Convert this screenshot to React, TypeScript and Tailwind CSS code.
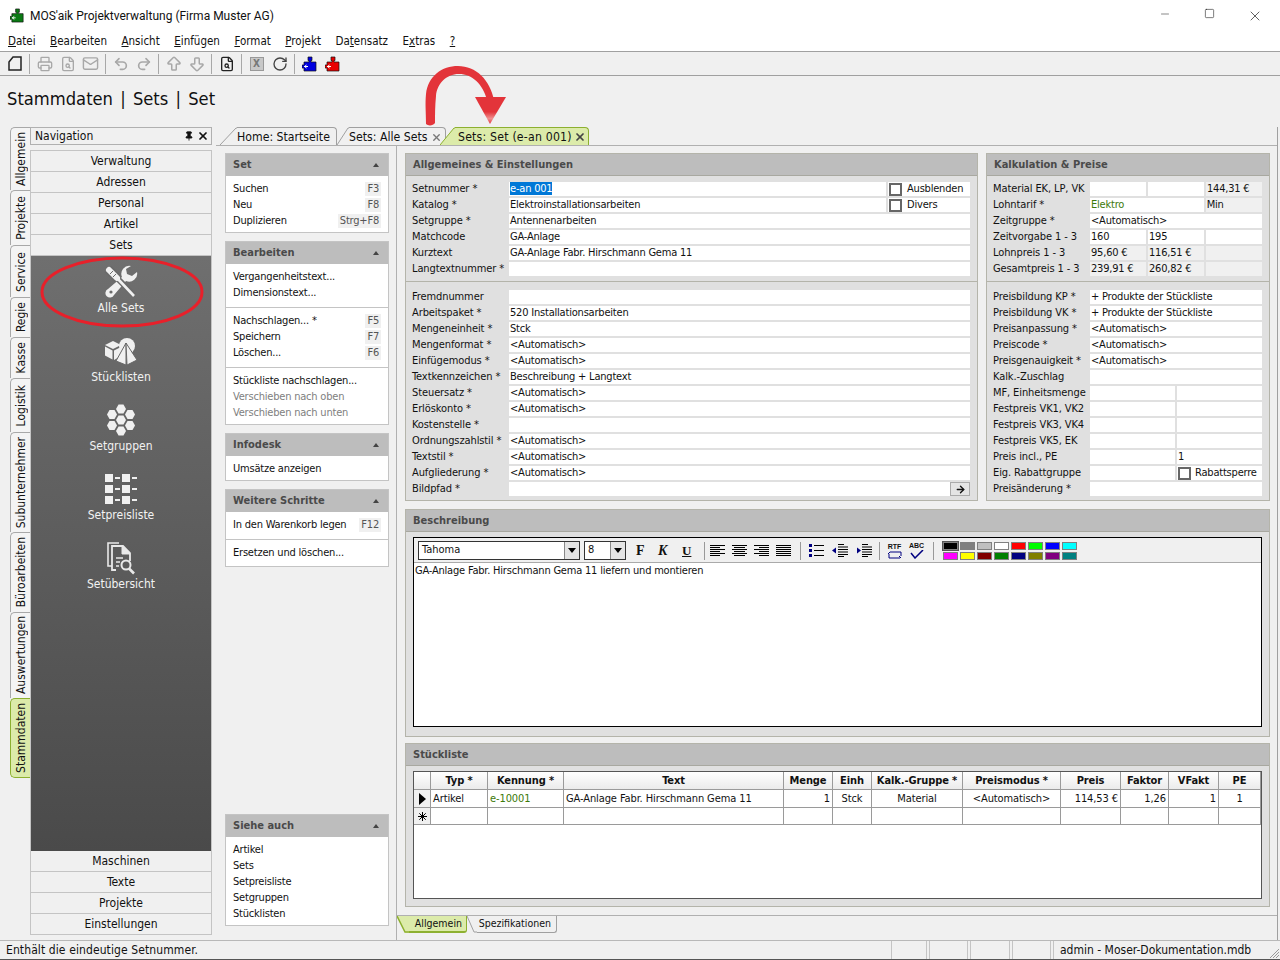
import type { ReactNode } from 'react';
import { Printer, FileSearch, Mail, Undo2, Redo2, ArrowBigUp, ArrowBigDown, RotateCw, X, Pin, Minus, Square, ArrowRight } from 'lucide-react';

const Puzzle = ({ color, size = 16 }: { color: string; size?: number }) => (
  <svg width={size} height={size} viewBox="0 0 16 16">
    <path d="M6 1h4v3.5H9V6h5v9H2v-3H0V9h2V6h5V4.5H6z" fill={color} stroke="#111" strokeWidth="0.7" />
    <path d="M2 10.5h4M4.5 9l-2 1.5 2 1.5" stroke="#fff" strokeWidth="1" fill="none" />
  </svg>
);

const ToolSep = () => <div className="w-px h-[20px] bg-[#a8a8a8] mx-[3px]" />;

const ToolBtn = ({ children }: { children: ReactNode }) => (
  <div className="w-[23px] h-[20px] flex items-center justify-center">{children}</div>
);

const menus: [string, string, string][] = [
  ['', 'D', 'atei'],
  ['', 'B', 'earbeiten'],
  ['', 'A', 'nsicht'],
  ['', 'E', 'infügen'],
  ['', 'F', 'ormat'],
  ['', 'P', 'rojekt'],
  ['Da', 't', 'ensatz'],
  ['E', 'x', 'tras'],
  ['', '?', ''],
];

const sideTabs = [
  { label: 'Allgemein', h: 'h-[63px]' },
  { label: 'Projekte', h: 'h-[55px]' },
  { label: 'Service', h: 'h-[52px]' },
  { label: 'Regie', h: 'h-[40px]' },
  { label: 'Kasse', h: 'h-[41px]' },
  { label: 'Logistik', h: 'h-[54px]' },
  { label: 'Subunternehmer', h: 'h-[100px]' },
  { label: 'Büroarbeiten', h: 'h-[80px]' },
  { label: 'Auswertungen', h: 'h-[86px]' },
];

const NavBtn = ({ label }: { label: string }) => (
  <div className="h-[21px] shrink-0 flex items-center justify-center border-b border-[#c4c4c4] bg-[#f0f0f0] text-[12px] text-[#111]">{label}</div>
);

const ToolsIcon = () => (
  <svg width="34" height="34" viewBox="0 0 34 34">
    <path d="M27 1A8 8 0 0 0 18 12L4 24a4.5 4.5 0 1 0 6 6l12-14a8 8 0 0 0 11-9l-5 4-5-2-1-5z" fill="#f0f0f0" />
    <circle cx="7" cy="27" r="1.6" fill="#6a6a6a" />
    <path d="M13 13L30 30" stroke="#6a6a6a" strokeWidth="6" />
    <path d="M13 13L30 31" stroke="#f0f0f0" strokeWidth="2.6" />
    <path d="M4 4L14 14" stroke="#6a6a6a" strokeWidth="9" />
    <path d="M5 5L13 13" stroke="#f0f0f0" strokeWidth="6" strokeLinecap="round" />
    <path d="M6 9L9 6M9 12L12 9" stroke="#6a6a6a" strokeWidth="1" />
  </svg>
);

const BoxesIcon = () => (
  <svg width="34" height="28" viewBox="0 0 34 28">
    <circle cx="23" cy="9" r="8" fill="#f0f0f0" />
    <path d="M1 8l8-4 8 4-8 4z" fill="#f0f0f0" />
    <path d="M1 9.5l7.5 4v9L1 18.5zM10 13.500l7-3.500v9l-7 4z" fill="#f0f0f0" />
    <path d="M22 6L12 24l10 4z" fill="#f0f0f0" stroke="#666" strokeWidth="1" />
    <path d="M22 6l11 17-10 5z" fill="#f0f0f0" stroke="#666" strokeWidth="1" />
  </svg>
);

const hexes: [number, number][] = [[16, 5], [7, 10.5], [25, 10.5], [16, 16], [7, 21.5], [25, 21.5], [16, 27]];

const HexIcon = () => (
  <svg width="32" height="32" viewBox="0 0 32 32">
    {hexes.map(([x, y]) => (
      <polygon key={`${x}-${y}`} points={`${x - 5},${y} ${x - 2.5},${y - 4.6} ${x + 2.5},${y - 4.6} ${x + 5},${y} ${x + 2.5},${y + 4.6} ${x - 2.5},${y + 4.6}`} fill="#f0f0f0" />
    ))}
  </svg>
);

const GridIcon = () => (
  <div className="grid grid-cols-[8px_5px_8px_5px] gap-x-[2px] gap-y-[3px] items-center w-[32px]">
    {[0, 1, 2].map((i) => (
      <div key={i} className="contents">
        <div className="h-[8px] bg-[#f0f0f0]" />
        <div className="h-[2px] bg-[#f0f0f0]" />
        <div className="h-[8px] bg-[#f0f0f0]" />
        <div className="h-[2px] bg-[#f0f0f0]" />
      </div>
    ))}
  </div>
);

const DocSearchIcon = () => (
  <svg width="28" height="33" viewBox="0 0 28 33" fill="none" stroke="#e8e8e8">
    <path d="M5 24H1V1h11" strokeWidth="1.6" />
    <path d="M9 28H5V4h11l7 7v8" strokeWidth="1.800" fill="#5b5b5b" />
    <path d="M15 4v8h8z" fill="#e8e8e8" />
    <path d="M9 16h7M9 20h4M9 24h3" strokeWidth="1.500" />
    <circle cx="19" cy="23" r="4.500" strokeWidth="2" />
    <path d="M22 26.500l5 5" strokeWidth="2.600" />
  </svg>
);

const navItems: [string, ReactNode][] = [
  ['Alle Sets', <ToolsIcon key="a" />],
  ['Stücklisten', <BoxesIcon key="b" />],
  ['Setgruppen', <HexIcon key="c" />],
  ['Setpreisliste', <GridIcon key="d" />],
  ['Setübersicht', <DocSearchIcon key="e" />],
];

const ActionRow = ({ label, keys, off }: { label: string; keys?: string; off?: boolean }) => (
  <div className={`h-[16px] flex items-center justify-between text-[11px] tracking-[-0.2px] ${off ? 'text-[#808080]' : 'text-[#111]'}`}>
    <span>{label}</span>
    {keys && <span className="bg-[#f0f0f0] px-[2px] text-[#555] leading-[14px]">{keys}</span>}
  </div>
);

const ActionGroup = ({ title, children, className = '' }: { title: string; children: ReactNode; className?: string }) => (
  <div className={`border border-[#c4c4c4] bg-white ${className}`}>
    <div className="h-[22px] bg-[#bdbdbd] flex items-center justify-between pl-[7px] pr-[9px]">
      <span className="text-[11px] font-bold font-['DejaVu_Sans'] text-[#4a4a4a]">{title}</span>
      <span className="w-0 h-0 border-x-[3px] border-x-transparent border-b-[4px] border-b-[#444]" />
    </div>
    {children}
  </div>
);

const ActionSection = ({ children, last, className }: { children: ReactNode; last?: boolean; className: string }) => (
  <div className={`px-[7px] ${className} ${last ? '' : 'border-b border-[#c4c4c4]'}`}>{children}</div>
);

const Field = ({ children, grey, className = '' }: { children?: ReactNode; grey?: boolean; className?: string }) => (
  <div className={`h-[14px] leading-[14px] pl-[1px] tracking-[-0.2px] overflow-hidden whitespace-nowrap ${grey ? 'bg-[#f0f0f0]' : 'bg-white'} ${className}`}>{children}</div>
);

const FormRow = ({ label, children }: { label: string; children: ReactNode }) => (
  <div className="flex h-[14px] items-center text-[11px] text-[#111]">
    <div className="w-[97px] shrink-0 whitespace-nowrap tracking-[-0.1px]">{label}</div>
    <div className="flex-1 flex gap-[2px] min-w-0">{children}</div>
  </div>
);

const Panel = ({ title, children, className = '' }: { title: string; children: ReactNode; className?: string }) => (
  <div className={`bg-[#e0e0e0] border border-[#b4b4aa] ${className}`}>
    <div className="h-[22px] pt-[1px] bg-[#bdbdbd] border-b border-[#a8a8a0] flex items-center px-[7px] text-[11px] font-bold font-['DejaVu_Sans'] text-[#4a4a4a]">{title}</div>
    {children}
  </div>
);

const Check = () => <span className="inline-block w-[13px] h-[13px] border-2 border-[#666] bg-white shrink-0" />;

const basicRows: [string, string][] = [
  ['Katalog *', 'Elektroinstallationsarbeiten'],
  ['Setgruppe *', 'Antennenarbeiten'],
  ['Matchcode', 'GA-Anlage'],
  ['Kurztext', 'GA-Anlage Fabr. Hirschmann Gema 11'],
  ['Langtextnummer *', ''],
];

const extraRows: [string, string][] = [
  ['Fremdnummer', ''],
  ['Arbeitspaket *', '520 Installationsarbeiten'],
  ['Mengeneinheit *', 'Stck'],
  ['Mengenformat *', '<Automatisch>'],
  ['Einfügemodus *', '<Automatisch>'],
  ['Textkennzeichen *', 'Beschreibung + Langtext'],
  ['Steuersatz *', '<Automatisch>'],
  ['Erlöskonto *', '<Automatisch>'],
  ['Kostenstelle *', ''],
  ['Ordnungszahlstil *', '<Automatisch>'],
  ['Textstil *', '<Automatisch>'],
  ['Aufgliederung *', '<Automatisch>'],
];

const priceTop: [string, string, string, string][] = [
  ['Zeitvorgabe 1 - 3', '160', '195', ''],
  ['Lohnpreis 1 - 3', '95,60 €', '116,51 €', ''],
  ['Gesamtpreis 1 - 3', '239,91 €', '260,82 €', ''],
];

const priceSingle: [string, string][] = [
  ['Preisbildung KP *', '+ Produkte der Stückliste'],
  ['Preisbildung VK *', '+ Produkte der Stückliste'],
  ['Preisanpassung *', '<Automatisch>'],
  ['Preiscode *', '<Automatisch>'],
  ['Preisgenauigkeit *', '<Automatisch>'],
  ['Kalk.-Zuschlag', ''],
];

const priceDouble: [string, string][] = [
  ['MF, Einheitsmenge', ''],
  ['Festpreis VK1, VK2', ''],
  ['Festpreis VK3, VK4', ''],
  ['Festpreis VK5, EK', ''],
  ['Preis incl., PE', '1'],
];

const Lines = ({ rows }: { rows: [number, number][] }) => (
  <svg width="16" height="12" viewBox="0 0 16 12" className="block">
    {rows.map(([x, w], i) => (
      <rect key={i} x={x} y={i * 2} width={w} height="1" fill="#000" />
    ))}
  </svg>
);

const EdSep = ({ className }: { className: string }) => <div className={`w-px h-[18px] bg-[#999] ${className}`} />;

const swatches = [
  'bg-[#000000]', 'bg-[#808080]', 'bg-[#c0c0c0]', 'bg-[#ffffff]', 'bg-[#ff0000]', 'bg-[#00ff00]', 'bg-[#0000ff]', 'bg-[#00ffff]',
  'bg-[#ff00ff]', 'bg-[#ffff00]', 'bg-[#800000]', 'bg-[#008000]', 'bg-[#000080]', 'bg-[#808000]', 'bg-[#800080]', 'bg-[#008080]',
];

const Combo = ({ text, className }: { text: string; className: string }) => (
  <div className={`h-[19px] flex items-center border border-[#333] bg-white ${className}`}>
    <span className="flex-1 pl-[3px] text-[11px]">{text}</span>
    <span className="w-[15px] h-[17px] bg-[#e4e4e4] border-l border-[#888] flex items-center justify-center">
      <span className="w-0 h-0 border-x-[4px] border-x-transparent border-t-[5px] border-t-black" />
    </span>
  </div>
);

const columns = ['', 'Typ *', 'Kennung *', 'Text', 'Menge', 'Einh', 'Kalk.-Gruppe *', 'Preismodus *', 'Preis', 'Faktor', 'VFakt', 'PE'];

const Cell = ({ children, className = '' }: { children?: ReactNode; className?: string }) => (
  <div className={`border-r border-b border-[#9a9a9a] px-[2px] pt-[1px] flex items-center overflow-hidden whitespace-nowrap ${className}`}>{children}</div>
);

export default function App() {
  return (
    <div className="relative w-[1280px] h-[960px] overflow-hidden flex flex-col bg-[#f0f0f0] text-[#111] font-['DejaVu_Sans','Noto_Sans',sans-serif] font-stretch-condensed">
      {/* Title bar */}
      <div className="h-[31px] bg-white flex items-center pl-[10px] pr-[3px] shrink-0">
        <Puzzle color="#0a7a14" size={15} />
        <span className="ml-[5px] text-[12px] font-['Roboto',sans-serif] font-stretch-normal">MOS'aik Projektverwaltung (Firma Muster AG)</span>
        <div className="ml-auto flex">
          <div className="w-[45px] flex justify-center"><Minus size={12} strokeWidth={1} /></div>
          <div className="w-[45px] flex justify-center"><Square size={11} strokeWidth={1.2} /></div>
          <div className="w-[45px] flex justify-center"><X size={16} strokeWidth={1} /></div>
        </div>
      </div>

      {/* Menu */}
      <div className="h-[20px] pt-[1px] bg-white flex items-center pl-[8px] gap-[14.5px] text-[11.5px] shrink-0">
        {menus.map(([a, u, b]) => (
          <span key={u + b}>{a}<u>{u}</u>{b}</span>
        ))}
      </div>

      {/* Toolbar */}
      <div className="h-[25px] border-y border-[#a0a0a0] flex items-center pl-[3px] shrink-0">
        <ToolBtn>
          <svg width="14" height="15" viewBox="0 0 14 15"><path d="M1 6l4-5h8v13H1z" fill="none" stroke="#222" strokeWidth="1.500" /></svg>
        </ToolBtn>
        <ToolSep />
        <ToolBtn><Printer size={16} color="#a8a8a8" /></ToolBtn>
        <ToolBtn><FileSearch size={16} color="#a8a8a8" /></ToolBtn>
        <ToolBtn><Mail size={17} color="#a8a8a8" /></ToolBtn>
        <ToolSep />
        <ToolBtn><Undo2 size={16} color="#a8a8a8" strokeWidth={2.500} /></ToolBtn>
        <ToolBtn><Redo2 size={16} color="#a8a8a8" strokeWidth={2.500} /></ToolBtn>
        <ToolSep />
        <ToolBtn><ArrowBigUp size={18} color="#a8a8a8" /></ToolBtn>
        <ToolBtn><ArrowBigDown size={18} color="#a8a8a8" /></ToolBtn>
        <ToolSep />
        <ToolBtn><FileSearch size={16} color="#222" /></ToolBtn>
        <ToolSep />
        <ToolBtn>
          <div className="w-[14px] h-[14px] border border-[#999] bg-[#c8c8c8] flex items-center justify-center text-[10px] font-bold text-[#777]">X</div>
        </ToolBtn>
        <ToolBtn><RotateCw size={16} color="#444" /></ToolBtn>
        <ToolSep />
        <ToolBtn><Puzzle color="#0000e0" /></ToolBtn>
        <ToolBtn><Puzzle color="#e80000" /></ToolBtn>
      </div>

      {/* Heading */}
      <div className="h-[51px] shrink-0 pl-[7px] pt-[9px] text-[18.2px] leading-[27px] [word-spacing:2px] text-[#111]">Stammdaten | Sets | Set</div>

      {/* Body */}
      <div className="flex-1 flex pl-[10px] min-h-0">
        {/* Side tabs */}
        <div className="w-[20px] flex flex-col shrink-0">
          {sideTabs.map((tab) => (
            <div key={tab.label} className={`${tab.h} border-l border-t border-[#a8a8a8] rounded-tl-[5px] bg-[#f4f4f4] flex items-center justify-center`}>
              <span className="[writing-mode:vertical-rl] rotate-180 text-[12px]">{tab.label}</span>
            </div>
          ))}
          <div className="h-[80px] border border-r-0 border-[#8db030] rounded-l-[5px] bg-[#dcebaa] flex items-center justify-center">
            <span className="[writing-mode:vertical-rl] rotate-180 text-[12px]">Stammdaten</span>
          </div>
        </div>

        {/* Navigation */}
        <div className="w-[182px] shrink-0 flex flex-col pb-[5px]">
          <div className="h-[18px] border border-[#b0b0b0] flex items-center justify-between pl-[4px] pr-[2px] text-[12px] shrink-0">
            <span>Navigation</span>
            <span className="flex items-center gap-[3px]">
              <Pin size={10} fill="#111" />
              <X size={12} strokeWidth={3.500} />
            </span>
          </div>
          <div className="mt-[5px] flex-1 flex flex-col border-x border-t border-[#c4c4c4] min-h-0">
            {['Verwaltung', 'Adressen', 'Personal', 'Artikel', 'Sets'].map((n) => <NavBtn key={n} label={n} />)}
            <div className="flex-1 bg-gradient-to-b from-[#6f6f6f] to-[#4a4a4a] pt-[9px]">
              {navItems.map(([label, icon]) => (
                <div key={label} className="h-[69px] flex flex-col items-center text-[12px] text-[#f2f2f2]">
                  <div className="h-[34px] flex items-center justify-center">{icon}</div>
                  <span className="mt-[-1px] leading-[20px]">{label}</span>
                </div>
              ))}
            </div>
            {['Maschinen', 'Texte', 'Projekte', 'Einstellungen'].map((n) => <NavBtn key={n} label={n} />)}
          </div>
        </div>

        {/* Document */}
        <div className="ml-[4px] w-[1062px] flex flex-col border-r border-[#a0a0a0]">
          {/* Tabs */}
          <div className="h-[19px] flex items-end border-b border-[#b0b0b0] text-[12.2px] shrink-0">
            <svg width="21" height="18" viewBox="0 0 21 18" className="shrink-0"><path d="M4 18L20 1h1" fill="none" stroke="#a0a0a0" /></svg>
            <div className="w-[100px] h-[18px] pt-[1px] border-t border-r border-[#a0a0a0] rounded-tr-[4px] flex items-center whitespace-nowrap">Home: Startseite</div>
            <svg width="12" height="18" viewBox="0 0 12 18" className="shrink-0"><path d="M0 18L11 1h1" fill="none" stroke="#a0a0a0" /></svg>
            <div className="w-[97px] h-[18px] pt-[1px] border-t border-r border-[#a0a0a0] rounded-tr-[4px] flex items-center whitespace-nowrap">
              Sets: Alle Sets
              <X size={11} strokeWidth={3} color="#777" className="ml-[4px]" />
            </div>
            <svg width="15" height="18" viewBox="0 0 15 18" className="shrink-0 -ml-[6px]"><path d="M0 18L14 1h1v17z" fill="#dcebaa" /><path d="M0 18L14 1h1" fill="none" stroke="#8db030" /></svg>
            <div className="w-[134px] h-[18px] pt-[1px] border-t border-r border-[#8db030] rounded-tr-[4px] bg-[#dcebaa] flex items-center whitespace-nowrap pl-[3px] tracking-[0.2px]">
              Sets: Set (e-an 001)
              <X size={12} strokeWidth={3.500} color="#444" className="ml-[2px]" />
            </div>
          </div>

          <div className="flex-1 flex min-h-0">
            {/* Actions column */}
            <div className="w-[181px] shrink-0 border-r border-[#b0b0b0] pt-[7px] pl-[9px] pr-[7px] pb-[14px] flex flex-col gap-[8px]">
              <ActionGroup title="Set">
                <ActionSection last className="pt-[5px] pb-[3px]">
                  <ActionRow label="Suchen" keys="F3" />
                  <ActionRow label="Neu" keys="F8" />
                  <ActionRow label="Duplizieren" keys="Strg+F8" />
                </ActionSection>
              </ActionGroup>
              <ActionGroup title="Bearbeiten">
                <ActionSection className="pt-[5px] pb-[6px]">
                  <ActionRow label="Vergangenheitstext..." />
                  <ActionRow label="Dimensionstext..." />
                </ActionSection>
                <ActionSection className="pt-[5px] pb-[6px]">
                  <ActionRow label="Nachschlagen... *" keys="F5" />
                  <ActionRow label="Speichern" keys="F7" />
                  <ActionRow label="Löschen..." keys="F6" />
                </ActionSection>
                <ActionSection last className="pt-[5px] pb-[3px]">
                  <ActionRow label="Stückliste nachschlagen..." />
                  <ActionRow label="Verschieben nach oben" off />
                  <ActionRow label="Verschieben nach unten" off />
                </ActionSection>
              </ActionGroup>
              <ActionGroup title="Infodesk">
                <ActionSection last className="pt-[5px] pb-[3px]"><ActionRow label="Umsätze anzeigen" /></ActionSection>
              </ActionGroup>
              <ActionGroup title="Weitere Schritte">
                <ActionSection className="pt-[5px] pb-[6px]"><ActionRow label="In den Warenkorb legen" keys="F12" /></ActionSection>
                <ActionSection last className="py-[5px]"><ActionRow label="Ersetzen und löschen..." /></ActionSection>
              </ActionGroup>
              <ActionGroup title="Siehe auch" className="mt-auto">
                <ActionSection last className="pt-[5px] pb-[3px]">
                  {['Artikel', 'Sets', 'Setpreisliste', 'Setgruppen', 'Stücklisten'].map((n) => <ActionRow key={n} label={n} />)}
                </ActionSection>
              </ActionGroup>
            </div>

            {/* Main */}
            <div className="flex-1 min-w-0 flex flex-col">
              <div className="flex-1 pl-[8px] pr-[7px] pt-[7px] flex flex-col min-h-0">
                <div className="flex gap-[8px] h-[348px] shrink-0">
                  <Panel title="Allgemeines & Einstellungen" className="w-[573px]">
                    <div className="pl-[6px] pr-[7px] pt-[6px] pb-[5px] border-b border-[#b4b4aa] flex flex-col gap-[2px]">
                      <FormRow label="Setnummer *">
                        <Field className="w-[377px] shrink-0"><span className="bg-[#0078d7] text-white">e-an 001</span></Field>
                        <Field className="flex-1 flex items-center gap-[5px] text-[11px]"><Check />Ausblenden</Field>
                      </FormRow>
                      {basicRows.map(([label, value], i) => (
                        <FormRow key={label} label={label}>
                          {i === 0 ? (
                            <>
                              <Field className="w-[377px] shrink-0">{value}</Field>
                              <Field className="flex-1 flex items-center gap-[5px]"><Check />Divers</Field>
                            </>
                          ) : (
                            <Field className="flex-1">{value}</Field>
                          )}
                        </FormRow>
                      ))}
                    </div>
                    <div className="pl-[6px] pr-[7px] pt-[8px] flex flex-col gap-[2px]">
                      {extraRows.map(([label, value]) => (
                        <FormRow key={label} label={label}>
                          <Field className="flex-1">{value}</Field>
                        </FormRow>
                      ))}
                      <FormRow label="Bildpfad *">
                        <Field className="flex-1 flex justify-end">
                          <span className="w-[20px] h-[14px] bg-[#e4e4e4] border border-[#aaa] flex items-center justify-center"><ArrowRight size={11} strokeWidth={3} /></span>
                        </Field>
                      </FormRow>
                    </div>
                  </Panel>

                  <Panel title="Kalkulation & Preise" className="w-[284px]">
                    <div className="pl-[6px] pr-[7px] pt-[6px] pb-[5px] border-b border-[#b4b4aa] flex flex-col gap-[2px]">
                      <FormRow label="Material EK, LP, VK">
                        <Field className="flex-1" />
                        <Field className="flex-1" />
                        <Field grey className="flex-1">144,31 €</Field>
                      </FormRow>
                      <FormRow label="Lohntarif *">
                        <Field className="flex-[2.04] text-[#3d7a0a]">Elektro</Field>
                        <Field grey className="flex-1">Min</Field>
                      </FormRow>
                      <FormRow label="Zeitgruppe *"><Field className="flex-1">&lt;Automatisch&gt;</Field></FormRow>
                      {priceTop.map(([label, a, b, c], i) => (
                        <FormRow key={label} label={label}>
                          <Field grey={i > 0} className="flex-1">{a}</Field>
                          <Field grey={i > 0} className="flex-1">{b}</Field>
                          <Field grey={i > 0} className="flex-1">{c}</Field>
                        </FormRow>
                      ))}
                    </div>
                    <div className="pl-[6px] pr-[7px] pt-[8px] flex flex-col gap-[2px]">
                      {priceSingle.map(([label, value]) => (
                        <FormRow key={label} label={label}><Field className="flex-1">{value}</Field></FormRow>
                      ))}
                      {priceDouble.map(([label, value]) => (
                        <FormRow key={label} label={label}>
                          <Field className="flex-1" />
                          <Field className="flex-1">{value}</Field>
                        </FormRow>
                      ))}
                      <FormRow label="Eig. Rabattgruppe">
                        <Field className="flex-1" />
                        <Field className="flex-1 flex items-center gap-[4px]"><Check />Rabattsperre</Field>
                      </FormRow>
                      <FormRow label="Preisänderung *"><Field className="flex-1" /></FormRow>
                    </div>
                  </Panel>
                </div>

                <Panel title="Beschreibung" className="mt-[8px] h-[228px] shrink-0">
                  <div className="mx-[7px] mt-[5px] h-[190px] border border-black bg-white text-[11px] flex flex-col">
                    <div className="h-[25px] pt-[1px] shrink-0 border-b border-[#aaa] bg-[#f0f0f0] flex items-center pl-[4px]">
                      <Combo text="Tahoma" className="w-[162px]" />
                      <Combo text="8" className="w-[42px] ml-[4px]" />
                      <span className="ml-[10px] w-[12px] font-['Liberation_Serif'] font-bold text-[14px] font-stretch-normal">F</span>
                      <span className="ml-[10px] w-[12px] font-['Liberation_Serif'] font-bold italic text-[14px] font-stretch-normal">K</span>
                      <span className="ml-[12px] w-[12px] font-['Liberation_Serif'] font-bold underline text-[13px] font-stretch-normal">U</span>
                      <EdSep className="ml-[10px] mr-[5px]" />
                      <div className="flex gap-[6px]">
                        <Lines rows={[[0, 15], [0, 10], [0, 15], [0, 10], [0, 15], [0, 10]]} />
                        <Lines rows={[[0, 15], [2, 11], [0, 15], [2, 11], [0, 15], [2, 11]]} />
                        <Lines rows={[[0, 15], [5, 10], [0, 15], [5, 10], [0, 15], [5, 10]]} />
                        <Lines rows={[[0, 15], [0, 15], [0, 15], [0, 15], [0, 15], [0, 15]]} />
                      </div>
                      <EdSep className="mx-[8px]" />
                      <div className="flex gap-[8px] items-center">
                        <svg width="15" height="13" viewBox="0 0 15 13"><path d="M0 0h3v3H0zM0 5h3v3H0zM0 10h3v3H0z" fill="#000080" /><path d="M5 1.500h10M5 6.500h10M5 11.500h10" stroke="#000" /></svg>
                        <svg width="16" height="13" viewBox="0 0 16 13"><path d="M0 6.500l4-3v6z" fill="#000080" /><path d="M6 .5h6M6 3h10M6 5.500h10M6 8h10M6 10.500h10M6 12.500h6" stroke="#000" /></svg>
                        <svg width="16" height="13" viewBox="0 0 16 13"><path d="M5 6.500l-4-3v6z" fill="#000080" /><path d="M6 .5h6M6 3h10M6 5.500h10M6 8h10M6 10.500h10M6 12.500h6" stroke="#000" /></svg>
                      </div>
                      <EdSep className="ml-[7px] mr-[6px]" />
                      <div className="flex gap-[5px] items-center font-['Liberation_Sans'] text-[7px] font-bold leading-[8px] font-stretch-normal">
                        <span className="flex flex-col items-center w-[17px]">RTF
                          <svg width="16" height="8" viewBox="0 0 16 8"><path d="M2 3v4h11M14 5V1H3M12 5l2 2M1 3l2-2" fill="none" stroke="#000080" /></svg>
                        </span>
                        <span className="flex flex-col items-center w-[17px]">ABC
                          <svg width="16" height="9" viewBox="0 0 16 9"><path d="M2 3l4 5 8-8" fill="none" stroke="#000080" strokeWidth="1.500" /></svg>
                        </span>
                      </div>
                      <EdSep className="ml-[8px] mr-[9px]" />
                      <div className="grid grid-cols-8 gap-x-[2px] gap-y-[2px]">
                        {swatches.map((c, i) => (
                          <span key={c} className={`w-[15px] h-[8px] border border-[#808080] ${c} ${i === 0 ? 'outline outline-1 outline-[#555]' : ''}`} />
                        ))}
                      </div>
                    </div>
                    <div className="pl-[1px] pt-[1px] leading-[14px] tracking-[-0.2px]">GA-Anlage Fabr. Hirschmann Gema 11 liefern und montieren</div>
                  </div>
                </Panel>

                <Panel title="Stückliste" className="mt-[6px] h-[164px] shrink-0">
                  <div className="mx-[7px] mt-[5px] h-[128px] border border-[#555] bg-white text-[11px] tracking-[-0.1px]">
                    <div className="grid grid-cols-[17px_57px_76px_220px_49px_39px_91px_98px_60px_48px_50px_42px] grid-rows-[18px_18px_17px]">
                      {columns.map((c, i) => (
                        <Cell key={i} className="justify-center font-bold bg-gradient-to-b from-white to-[#ebebeb] text-[11px]">{c}</Cell>
                      ))}
                      <Cell className="justify-center bg-[#f0f0f0]"><span className="w-0 h-0 border-y-[6px] border-y-transparent border-l-[7px] border-l-black" /></Cell>
                      <Cell>Artikel</Cell>
                      <Cell className="text-[#3d7a0a]">e-10001</Cell>
                      <Cell>GA-Anlage Fabr. Hirschmann Gema 11</Cell>
                      <Cell className="justify-end">1</Cell>
                      <Cell className="justify-center">Stck</Cell>
                      <Cell className="justify-center">Material</Cell>
                      <Cell className="justify-center">&lt;Automatisch&gt;</Cell>
                      <Cell className="justify-end">114,53 €</Cell>
                      <Cell className="justify-end">1,26</Cell>
                      <Cell className="justify-end">1</Cell>
                      <Cell className="justify-center">1</Cell>
                      <Cell className="justify-center bg-[#f0f0f0]">
                        <svg width="9" height="9" viewBox="0 0 9 9"><path d="M4.5 0v9M0 4.500h9M1.300 1.300l6.400 6.400M7.700 1.300L1.300 7.700" stroke="#000" /></svg>
                      </Cell>
                      {columns.slice(1).map((c) => <Cell key={c} />)}
                    </div>
                  </div>
                </Panel>
              </div>

              {/* Bottom tabs */}
              <div className="h-[25px] shrink-0 border-t border-[#b0b0b0] mt-[8px] flex items-start text-[10.5px]">
                <svg width="12" height="17" viewBox="0 0 12 17" className="shrink-0"><path d="M0 0h12v17H8z" fill="#dcebaa" /><path d="M0 0L8 16h4" fill="none" stroke="#8db030" strokeWidth="1.500" /></svg>
                <div className="w-[58px] h-[17px] bg-[#dcebaa] border-b-2 border-r border-[#8db030] rounded-br-[3px] flex items-center justify-end pr-[4px]">Allgemein</div>
                <svg width="10" height="17" viewBox="0 0 10 17" className="shrink-0"><path d="M0 0L7 16h3" fill="none" stroke="#a0a0a0" /></svg>
                <div className="w-[80px] h-[17px] border-b border-r border-[#a0a0a0] rounded-br-[3px] flex items-center justify-end pr-[5px] whitespace-nowrap">Spezifikationen</div>
              </div>
            </div>
          </div>
        </div>
      </div>

      {/* Status bar */}
      <div className="h-[20px] shrink-0 border-t border-[#b8b8b8] border-b border-b-[#555] flex items-center text-[12px]">
        <span className="flex-1 pl-[6px] tracking-[0.1px]">Enthält die eindeutige Setnummer.</span>
        <div className="flex h-full gap-[2px]">
          <div className="w-[36px] border-l border-r border-[#c4c4c4]" />
          <div className="w-[39px] border-l border-r border-[#c4c4c4]" />
          <div className="w-[40px] border-l border-r border-[#c4c4c4]" />
          <div className="w-[39px] border-l border-r border-[#c4c4c4]" />
          <div className="w-[227px] border-l border-[#c4c4c4] pl-[6px] leading-[18px] flex items-center justify-between whitespace-nowrap">
            admin - Moser-Dokumentation.mdb
            <svg width="12" height="12" viewBox="0 0 12 12" className="self-end shrink-0"><path d="M11 2L2 11M11 5l-6 6M11 8l-3 3" stroke="#999" /></svg>
          </div>
        </div>
      </div>

      {/* Annotations over the screenshot */}
      <svg className="absolute left-0 top-0 pointer-events-none" width="1280" height="960">
        <defs>
          <linearGradient id="head" x1="0" y1="0" x2="0" y2="1">
            <stop offset="0" stopColor="#e3343a" />
            <stop offset="0.55" stopColor="#e3343a" />
            <stop offset="0.8" stopColor="#f09090" />
            <stop offset="1" stopColor="#e3343a" />
          </linearGradient>
        </defs>
        <ellipse cx="122" cy="292" rx="80" ry="34" fill="none" stroke="#e8202a" strokeWidth="3" />
        <path d="M426 124C426 112 425 104 426 94C428 76 442 66 458 66C476 66 490 80 494 100L487 100C483 84 472 74 459 74C446 74 437 84 436 96C435 106 435 114 435 123C433 126 428 126 426 124Z" fill="#e3343a" />
        <path d="M475 97H506L490 124Z" fill="url(#head)" />
      </svg>
    </div>
  );
}
